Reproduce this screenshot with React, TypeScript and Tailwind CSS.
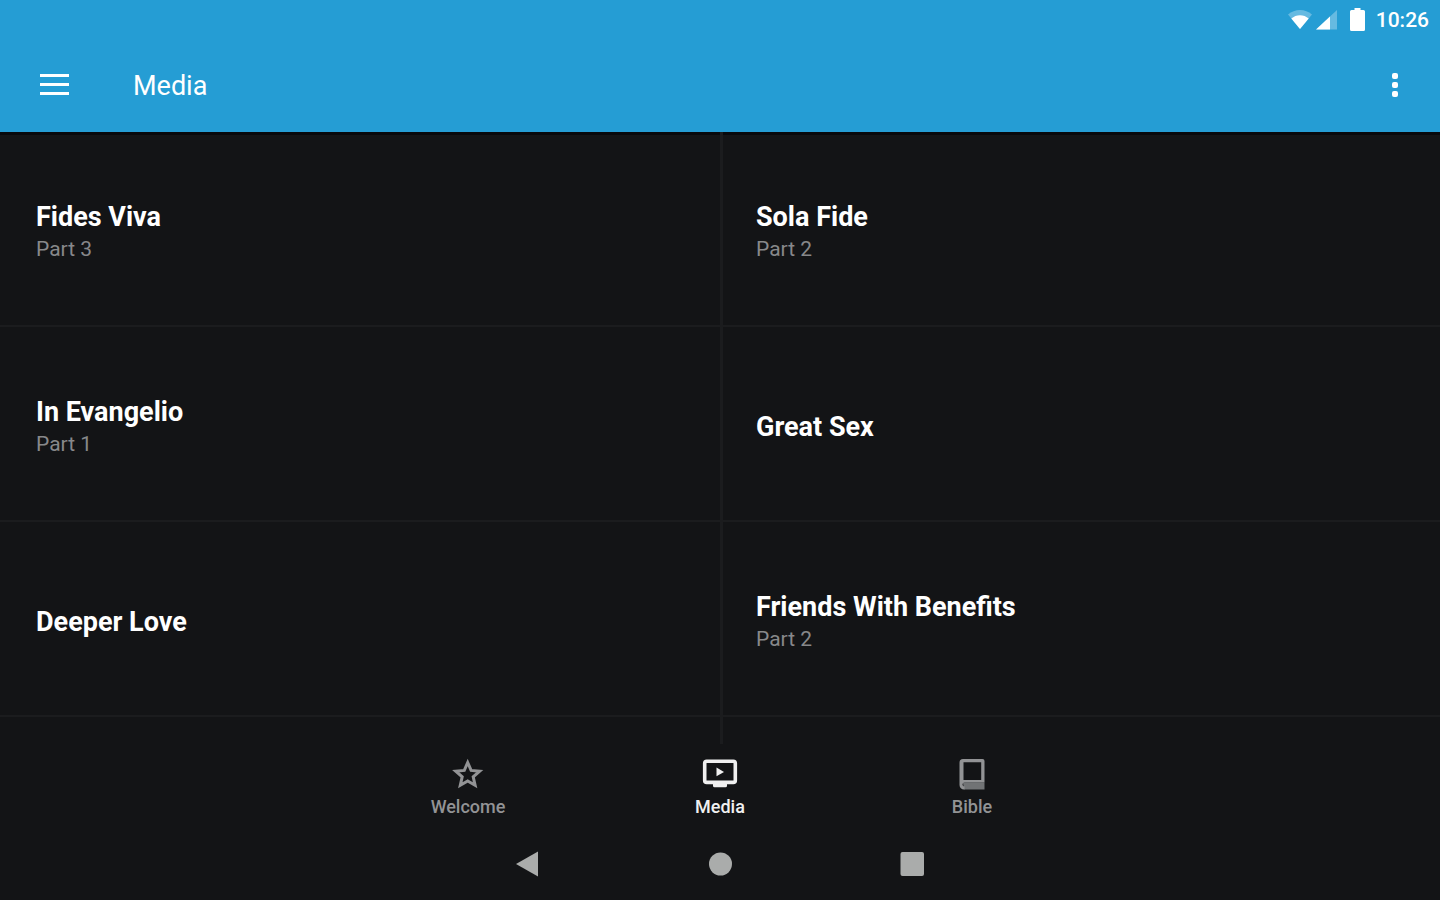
import clsx from "clsx";

const items = [
  { title: "Fides Viva", part: "Part 3" },
  { title: "Sola Fide", part: "Part 2" },
  { title: "In Evangelio", part: "Part 1" },
  { title: "Great Sex" },
  { title: "Deeper Love" },
  { title: "Friends With Benefits", part: "Part 2" },
];

const tabs = [
  { label: "Welcome", icon: StarIcon, active: false },
  { label: "Media", icon: MediaIcon, active: true },
  { label: "Bible", icon: BibleIcon, active: false },
];

function StarIcon() {
  return (
    <svg viewBox="0 0 36 36" className="h-9 w-9" fill="none" stroke="currentColor" strokeWidth="3">
      <path d="M17.700 6.500l3.400 7.900 8.600.8-6.500 5.700 1.900 8.400-7.400-4.400-7.400 4.400 1.900-8.400-6.500-5.700 8.600-.8z" />
    </svg>
  );
}

function MediaIcon() {
  return (
    <svg viewBox="0 0 36 36" className="h-9 w-9" fill="none">
      <rect x="2.7" y="5.2" width="30.6" height="21.2" rx="2" stroke="currentColor" strokeWidth="3.6" />
      <path d="M11 27h14v2.800a1.500 1.500 0 0 1-1.500 1.500h-11a1.500 1.500 0 0 1-1.500-1.500z" fill="currentColor" />
      <path d="M14.500 11.500v8.800l7.500-4.400z" fill="currentColor" />
    </svg>
  );
}

function BibleIcon() {
  return (
    <svg viewBox="0 0 36 36" className="h-9 w-9" fill="none">
      <path
        d="M9 3h19.500a2 2 0 0 1 2 2v21.500H10.500a2 2 0 0 0 0 4V33.500h-.5a4.500 4.500 0 0 1-4.500-4.500V6.500A3.500 3.500 0 0 1 9 3zM9.500 6.300V24h17.700V6.300z"
        fill="currentColor"
        fillRule="evenodd"
      />
      <path d="M9 26.500h21.500v7H10z" fill="currentColor" opacity="0.75" />
    </svg>
  );
}

function StatusBar() {
  return (
    <div className="flex h-10 items-center justify-end pr-[11px] text-white">
      <svg viewBox="0 0 26 20" className="h-5 w-[26px]" fill="currentColor">
        <path d="M13 19L1 4.500C4.500 1.500 8.500 0 13 0s8.500 1.500 12 4.500z" opacity="0.3" />
        <path d="M13 19L4.300 8.500C6.800 6.400 9.800 5.200 13 5.200s6.200 1.200 8.700 3.300z" />
      </svg>
      <svg viewBox="0 0 22 20" className="ml-[3px] h-5 w-[22px]" fill="currentColor">
        <path d="M0 19.500L21 0v19.500z" opacity="0.3" />
        <path d="M0 19.500L14 6.500v13z" />
      </svg>
      <svg viewBox="0 0 15 23" className="mr-[11px] mb-0.5 ml-3 h-[23px] w-[15px]" fill="currentColor">
        <path d="M4.500 0h6v2h3A1.500 1.500 0 0 1 15 3.500v18a1.500 1.500 0 0 1-1.500 1.500h-12A1.500 1.500 0 0 1 0 21.500v-18a1.500 1.500 0 0 1 1.500-1.500h3z" />
      </svg>
      <span className="text-[21px] leading-10 font-medium">10:26</span>
    </div>
  );
}

function AppBar() {
  return (
    <div className="flex h-[92px] items-center px-10 text-white">
      <button type="button" aria-label="Menu" className="flex w-7 flex-col gap-[6px] pb-1">
        <span className="h-[3px] w-[29px] bg-current" />
        <span className="h-[3px] w-[29px] bg-current" />
        <span className="h-[3px] w-[29px] bg-current" />
      </button>
      <h1 className="ml-[65px] text-[27px]">Media</h1>
      <button type="button" aria-label="More options" className="ml-auto flex flex-col gap-[3px] pr-0.5 pb-0.5">
        <span className="h-1.5 w-1.5 rounded-[2px] bg-current" />
        <span className="h-1.5 w-1.5 rounded-[2px] bg-current" />
        <span className="h-1.5 w-1.5 rounded-[2px] bg-current" />
      </button>
    </div>
  );
}

export default function App() {
  return (
    <div className="flex h-[900px] w-[1440px] flex-col overflow-hidden bg-[#131416] font-[Roboto,sans-serif]">
      <header className="h-[132px] shrink-0 bg-[#259dd4]">
        <StatusBar />
        <AppBar />
      </header>

      <main className="grid h-[612px] shrink-0 auto-rows-[195px] grid-cols-2 content-start overflow-hidden shadow-[inset_0_3px_0_#08090c]">
        {items.map((item, i) => (
          <div
            key={item.title}
            className={clsx(
              "flex flex-col justify-center border-b-2 border-[#1b1c1e]",
              i % 2 === 0 ? "pl-9" : "border-l-3 pl-[33px]",
              item.part ? "pt-[9px]" : "pt-1.5",
            )}
          >
            <h2 className="text-[27px] leading-8 font-bold text-white">{item.title}</h2>
            {item.part && <p className="text-[21px] leading-8 text-[#87888a]">{item.part}</p>}
          </div>
        ))}
        <div className="col-start-2 border-l-3 border-[#1b1c1e]" />
      </main>

      <nav className="flex h-[84px] shrink-0 justify-center">
        {tabs.map(({ label, icon: Icon, active }) => (
          <button
            key={label}
            type="button"
            className={clsx(
              "flex w-[252px] flex-col items-center pt-3",
              active ? "text-[#f0f0f0]" : "text-[#929395]",
            )}
          >
            <Icon />
            <span className="text-[18px] leading-[30px] font-medium">{label}</span>
          </button>
        ))}
      </nav>

      <div className="flex h-[72px] shrink-0 items-center justify-center gap-[168px] text-[#aaacab]">
        <svg viewBox="0 0 24 26" className="h-[26px] w-6" fill="currentColor">
          <path d="M0 13L22 .5v25z" />
        </svg>
        <svg viewBox="0 0 24 24" className="h-6 w-6" fill="currentColor">
          <circle cx="12.500" cy="12" r="11.5" />
        </svg>
        <svg viewBox="0 0 24 24" className="h-6 w-6" fill="currentColor">
          <rect x="0.5" width="23.5" height="24" rx="2" />
        </svg>
      </div>
    </div>
  );
}
